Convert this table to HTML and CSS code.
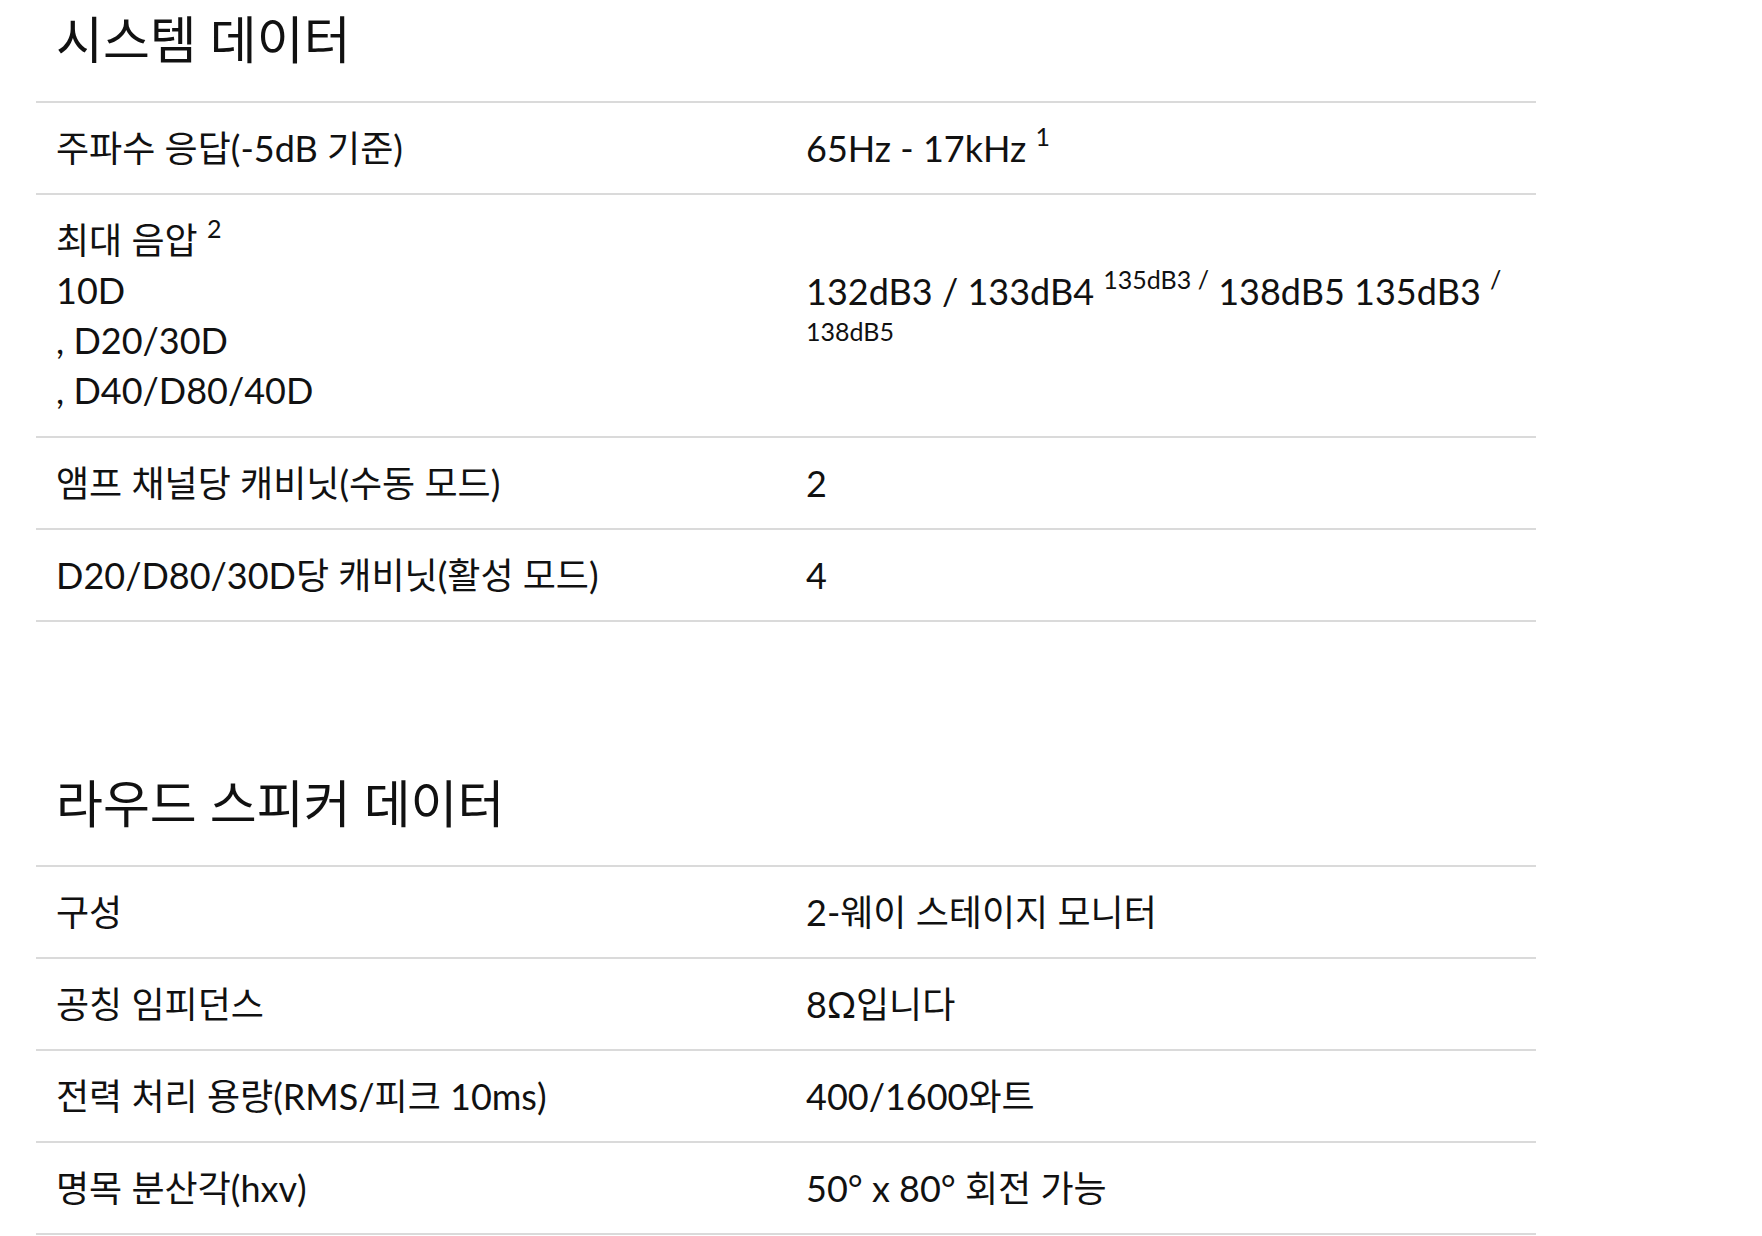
FILE: index.html
```html
<!DOCTYPE html>
<html lang="ko">
<head>
    <meta charset="UTF-8">
    <meta name="viewport" content="width=device-width, initial-scale=1.0">
    <title>시스템 데이터</title>
    <link rel="stylesheet" href="styles.css">
</head>
<body>
    <div class="specs">
        <section class="spec-group">
            <h2>시스템 데이터</h2>
            <div class="spec-row">
                <div class="spec-label">주파수 응답(-5dB 기준)</div>
                <div class="spec-value">65Hz - 17kHz <sup>1</sup></div>
            </div>
            <div class="spec-row spec-row-tall">
                <div class="spec-label">최대 음압 <sup>2</sup><br>10D<br>, D20/30D<br>, D40/D80/40D</div>
                <div class="spec-value">
                    132dB3 / 133dB4 <sup>135dB3 /</sup> 138dB5 135dB3 <sup>/</sup>
                    <span class="spec-note">138dB5</span>
                </div>
            </div>
            <div class="spec-row">
                <div class="spec-label">앰프 채널당 캐비닛(수동 모드)</div>
                <div class="spec-value">2</div>
            </div>
            <div class="spec-row">
                <div class="spec-label">D20/D80/30D당 캐비닛(활성 모드)</div>
                <div class="spec-value">4</div>
            </div>
        </section>

        <section class="spec-group">
            <h2>라우드 스피커 데이터</h2>
            <div class="spec-row">
                <div class="spec-label">구성</div>
                <div class="spec-value">2-웨이 스테이지 모니터</div>
            </div>
            <div class="spec-row">
                <div class="spec-label">공칭 임피던스</div>
                <div class="spec-value">8Ω입니다</div>
            </div>
            <div class="spec-row">
                <div class="spec-label">전력 처리 용량(RMS/피크 10ms)</div>
                <div class="spec-value">400/1600와트</div>
            </div>
            <div class="spec-row">
                <div class="spec-label">명목 분산각(hxv)</div>
                <div class="spec-value">50° x 80° 회전 가능</div>
            </div>
        </section>
    </div>
</body>
</html>
```

FILE: styles.css
```css
body {
    font-family: "Lato", "Noto Sans CJK KR", sans-serif;
    margin: 0;
    padding: 12px 0 0 36px;
    background-color: #fff;
    color: #111;
}
.specs {
    width: 1500px;
}
.spec-group + .spec-group {
    margin-top: 154px;
}
.spec-group h2 {
    font-size: 51px;
    font-weight: normal;
    line-height: 55px;
    margin: 0 0 34px;
    padding: 0 20px;
}
.spec-row {
    display: grid;
    grid-template-columns: 1fr 1fr;
    align-items: center;
    padding: 20px 0;
    border-top: 2px solid #dadada;
    font-size: 36px;
    line-height: 50px;
}
.spec-row-tall {
    padding-bottom: 21px;
}
.spec-row:last-child {
    border-bottom: 2px solid #dadada;
}
.spec-label,
.spec-value {
    padding: 0 20px;
}
sup {
    font-size: 25px;
    line-height: 0;
    vertical-align: 16px;
}
.spec-note {
    display: block;
    font-size: 25px;
    line-height: 30px;
    margin-bottom: 18px;
}
```
